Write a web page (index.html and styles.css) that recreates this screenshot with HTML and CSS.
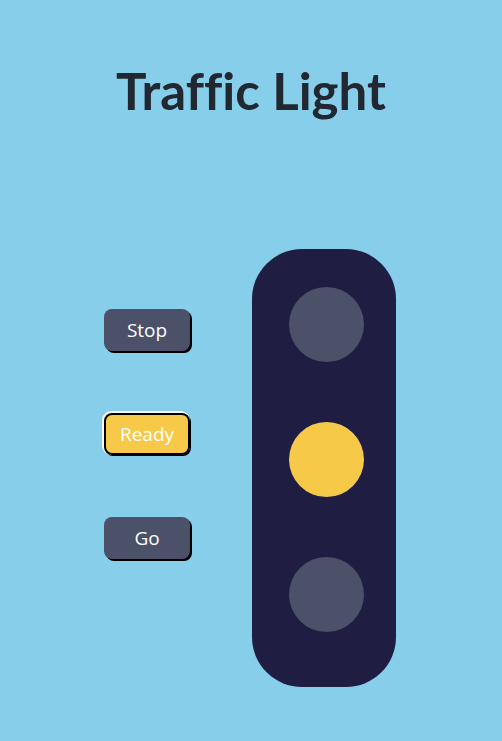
FILE: index.html
```html
<!DOCTYPE html>
<html>
<head>
<meta charset="utf-8">
<link rel="stylesheet" href="styles.css">
</head>
<body>
<h1 class="title">Traffic Light</h1>
<div class="stage">
  <div class="controls">
    <button class="btn">Stop</button>
    <button class="btn btn-active">Ready</button>
    <button class="btn">Go</button>
  </div>
  <div class="light">
    <div class="lamp"></div>
    <div class="lamp lamp-on"></div>
    <div class="lamp"></div>
  </div>
</div>
</body>
</html>
```
FILE: styles.css
```css
html, body {
  margin: 0;
  padding: 0;
}
body {
  background: #87ceeb;
  width: 502px;
  height: 741px;
  font-family: "Open Sans", "Noto Sans", sans-serif;
}
.title {
  margin: 0;
  padding-top: 58px;
  text-align: center;
  font-family: "Lato", "Open Sans", sans-serif;
  font-size: 51px;
  line-height: 66px;
  font-weight: 700;
  font-variant-ligatures: none;
  color: #222831;
}
.stage {
  display: flex;
  justify-content: center;
  align-items: flex-start;
  gap: 62px;
  margin-top: 125px;
  padding-right: 2px;
}
.controls {
  display: flex;
  flex-direction: column;
  gap: 62px;
  margin-top: 60px;
}
.btn {
  width: 86px;
  height: 42px;
  border: none;
  border-radius: 8px;
  background: #4b5169;
  color: #fff;
  font-family: "Open Sans", "Noto Sans", sans-serif;
  font-size: 19px;
  box-shadow: 2px 2px 0 #000;
  padding: 0;
}
.btn-active {
  background: #f7c948;
  border: 2px solid #000;
  box-shadow: -1px -1px 0 1px #fff, 1px 1px 0 0 #000;
}
.light {
  width: 144px;
  height: 438px;
  box-sizing: border-box;
  border-radius: 50px;
  background: #1f1e42;
  display: flex;
  flex-direction: column;
  align-items: center;
  gap: 60px;
  padding: 38px 0 0 5px;
}
.lamp {
  width: 75px;
  height: 75px;
  border-radius: 50%;
  background: #4b5169;
}
.lamp-on {
  background: #f7c948;
}
```
